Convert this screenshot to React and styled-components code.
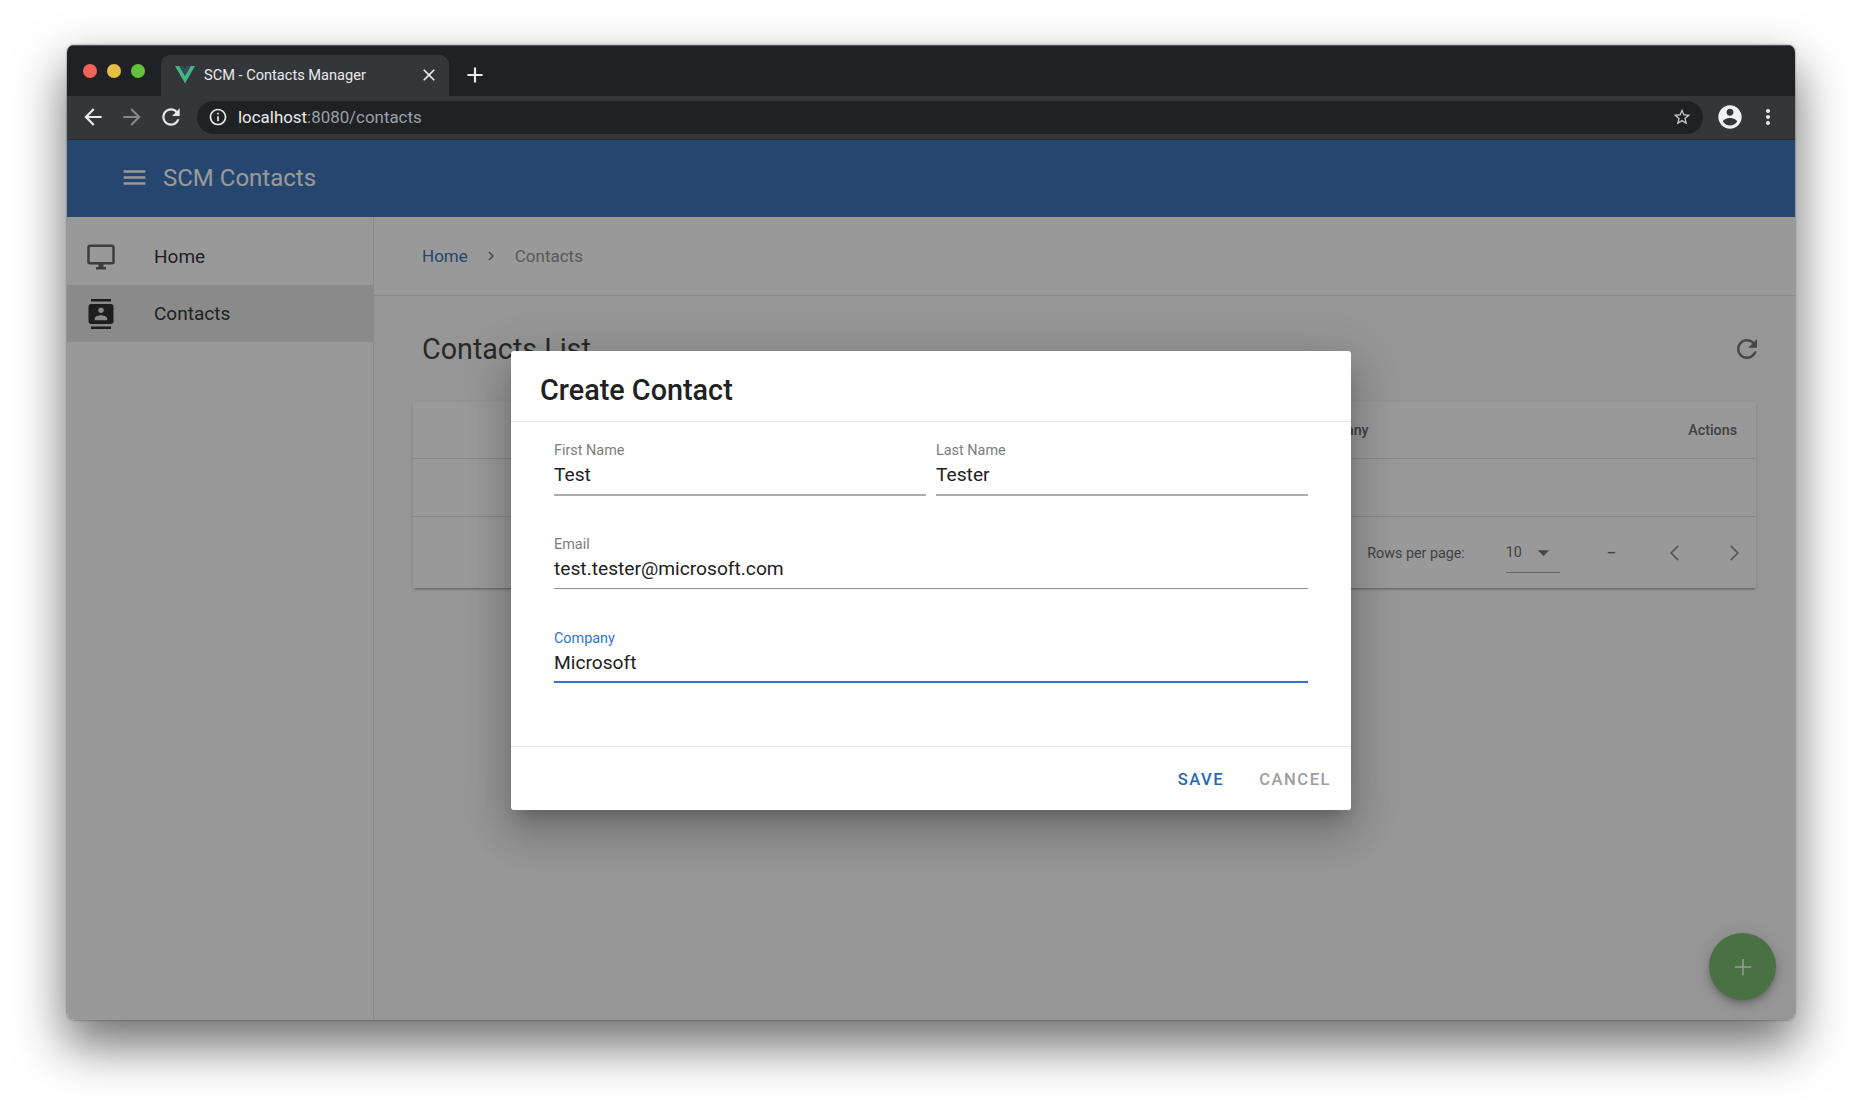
import React from "react";
import styled, { createGlobalStyle } from "styled-components";

const Global = createGlobalStyle`
  html, body { margin: 0; padding: 0; background: #fff; }
  body { font-family: Roboto, "Liberation Sans", sans-serif; width: 1862px; height: 1109px; overflow: hidden; }
  * { box-sizing: border-box; }
`;

const Page = styled.div`
  width: 1862px;
  height: 1109px;
  padding: 45px 67px 89px 67px;
`;

const Win = styled.div`
  position: relative;
  height: 975px;
  border-radius: 7px;
  display: flex;
  flex-direction: column;
  overflow: hidden;
`;

const WinShadow = styled.div`
  height: 100%;
  border-radius: 7px;
  box-shadow: 0 24px 50px 2px rgba(0, 0, 0, 0.56), 0 0 2px rgba(0, 0, 0, 0.6);
`;

const TabStrip = styled.div`
  height: 51px;
  flex: none;
  background: #202124;
  display: flex;
  align-items: flex-end;
  padding-left: 16px;
  border-top: 1px solid #55565a;
`;

const Lights = styled.div`
  display: flex;
  gap: 10px;
  width: 78px;
  align-self: flex-start;
  margin-top: 18px;
`;

const Light = styled.span`
  width: 14px;
  height: 14px;
  border-radius: 50%;
  background: ${p => p.$c};
`;

const Tab = styled.div`
  width: 288px;
  height: 41px;
  background: #35363a;
  border-radius: 9px 9px 0 0;
  display: flex;
  align-items: center;
  padding: 0 10px 2px 14px;
  color: #e8eaed;
  font-size: 14.6px;
`;

const TabTitle = styled.span`
  flex: 1;
  margin-left: 9px;
  white-space: nowrap;
`;

const NewTab = styled.div`
  height: 41px;
  display: flex;
  align-items: center;
  margin-left: 13px;
  padding-bottom: 2px;
`;

const Toolbar = styled.div`
  height: 44px;
  flex: none;
  background: #35363a;
  display: flex;
  align-items: center;
  padding: 0 15px 1px 13px;
  border-bottom: 1px solid #2a2b2e;
`;

const NavIcons = styled.div`
  display: flex;
  flex: none;
  gap: 13px;
  width: 117px;
`;

const Address = styled.div`
  width: 1506px;
  height: 33px;
  flex: none;
  background: #202124;
  border-radius: 17px;
  display: flex;
  align-items: center;
  padding: 0 11px 0 11px;
  font-size: 16.9px;
  color: #9aa0a6;
`;

const Url = styled.span`
  flex: 1;
  margin-left: 10px;
  b { font-weight: 400; color: #e8eaed; }
`;

const ToolRight = styled.div`
  display: flex;
  align-items: center;
  gap: 12px;
  margin-left: 13px;
  flex: none;
`;

const App_ = styled.div`
  flex: 1;
  position: relative;
  display: flex;
  flex-direction: column;
  min-height: 0;
`;

const AppBar = styled.div`
  height: 77px;
  flex: none;
  background: #2867b2;
  display: flex;
  align-items: center;
  padding: 0 0 2px 53px;
  color: #fff;
  font-size: 24px;
`;

const BarTitle = styled.span`
  margin-left: 14px;
`;

const Body = styled.div`
  flex: 1;
  display: flex;
  min-height: 0;
`;

const Sidebar = styled.nav`
  width: 307px;
  flex: none;
  background: #fff;
  border-right: 1px solid #e4e4e4;
  padding-top: 11px;
`;

const NavItem = styled.div`
  height: 57px;
  display: flex;
  align-items: center;
  padding-left: 19px;
  font-size: 19px;
  color: #212121;
  background: ${p => (p.$active ? "#e4e4e4" : "transparent")};
`;

const NavLabel = styled.span`
  margin-left: 38px;
`;

const Main = styled.main`
  flex: 1;
  min-width: 0;
  background: #f9f9f9;
`;

const Crumbs = styled.div`
  height: 79px;
  background: #fff;
  border-bottom: 1px solid #e6e6e6;
  display: flex;
  align-items: center;
  padding-left: 48px;
  font-size: 17px;
  color: #8a8a8a;
`;

const CrumbLink = styled.span`
  color: #2867b2;
`;

const CrumbSep = styled.span`
  display: flex;
  margin: 0 15px 0 14px;
`;

const TitleRow = styled.div`
  display: flex;
  align-items: center;
  justify-content: space-between;
  padding: 0 33px 0 48px;
  height: 106px;
`;

const PageTitle = styled.h1`
  margin: 0;
  font-size: 28.7px;
  font-weight: 400;
  color: #303030;
  line-height: 36px;
`;

const Card = styled.div`
  margin: 0 39px;
  background: #fff;
  box-shadow: 0 2px 2px -1px rgba(0, 0, 0, 0.35), 0 1px 4px rgba(0, 0, 0, 0.1);
`;

const HeadRow = styled.div`
  height: 57px;
  display: grid;
  grid-template-columns: 876px 1fr auto;
  align-items: center;
  padding: 0 19px;
  font-size: 14.3px;
  font-weight: 500;
  color: #5c5c5c;
  border-bottom: 1px solid #e0e0e0;
`;

const EmptyRow = styled.div`
  height: 58px;
  border-bottom: 1px solid #e0e0e0;
`;

const Foot = styled.div`
  height: 71px;
  display: flex;
  align-items: center;
  justify-content: flex-end;
  padding: 0 9px 0 0;
  font-size: 14.3px;
  color: #5c5c5c;
`;

const SelectBox = styled.div`
  width: 54px;
  height: 41px;
  margin: 0 47px 0 41px;
  display: flex;
  align-items: center;
  justify-content: space-between;
  padding: 0 3px 0 0;
  border-bottom: 1px solid #9e9e9e;
  font-size: 14.3px;
`;

const Dash = styled.span`
  margin-right: 46px;
  font-weight: 500;
`;

const Pager = styled.div`
  display: flex;
  gap: 33px;
`;

const Fab = styled.div`
  position: absolute;
  right: 19px;
  bottom: 20px;
  width: 67px;
  height: 67px;
  border-radius: 50%;
  background: #6eb562;
  display: flex;
  align-items: center;
  justify-content: center;
  box-shadow: 0 3px 5px -1px rgba(0, 0, 0, 0.2), 0 6px 10px 0 rgba(0, 0, 0, 0.14), 0 1px 18px 0 rgba(0, 0, 0, 0.12);
`;

const Scrim = styled.div`
  position: absolute;
  inset: 0;
  background: rgba(33, 33, 33, 0.46);
  display: flex;
  justify-content: center;
  align-items: flex-start;
  padding-top: 211px;
`;

const Dialog = styled.div`
  width: 840px;
  height: 459px;
  background: #fff;
  border-radius: 3px;
  display: flex;
  flex-direction: column;
  box-shadow: 0 11px 15px -7px rgba(0, 0, 0, 0.2), 0 24px 38px 3px rgba(0, 0, 0, 0.14), 0 9px 46px 8px rgba(0, 0, 0, 0.12);
`;

const DialogTitle = styled.div`
  height: 71px;
  flex: none;
  border-bottom: 1px solid #e6e6e6;
  padding: 7px 0 0 29px;
  display: flex;
  align-items: center;
  font-size: 28.8px;
  font-weight: 500;
  color: #212121;
`;

const Form = styled.div`
  flex: 1;
  padding: 20px 43px 0;
  display: grid;
  grid-template-columns: 1fr 1fr;
  column-gap: 10px;
  row-gap: 40px;
  align-content: start;
`;

const lines = {
  thick: "2px solid #adadad",
  thin: "1px solid #8f8f8f",
  focus: "2px solid #2b76d6",
};

const Field = styled.div`
  grid-column: ${p => (p.$wide ? "1 / -1" : "auto")};
  height: ${p => (p.$wide ? "53px" : "54px")};
  margin-bottom: ${p => (p.$wide ? "1px" : "0")};
  border-bottom: ${p => lines[p.$line]};
  display: flex;
  flex-direction: column;
`;

const FieldLabel = styled.label`
  font-size: 14.4px;
  line-height: 18px;
  color: ${p => (p.$focus ? "#2b76d6" : "#7d7d7d")};
`;

const FieldValue = styled.div`
  font-size: 19.2px;
  line-height: 28px;
  margin-top: 1px;
  color: #212121;
`;

const Actions = styled.div`
  height: 64px;
  flex: none;
  border-top: 1px solid #e6e6e6;
  display: flex;
  align-items: center;
  justify-content: flex-end;
  padding: 1px 20px 0 0;
  gap: 35px;
`;

const TextBtn = styled.span`
  font-size: 16.6px;
  font-weight: 500;
  letter-spacing: 1.5px;
  color: ${p => (p.$primary ? "#2867b2" : "#9e9e9e")};
`;

const Icon = ({ d, size = 24, color = "currentColor" }) => (
  <svg width={size} height={size} viewBox="0 0 24 24" style={{ display: "block", flex: "none" }}>
    <path d={d} fill={color} />
  </svg>
);

const ThinIcon = ({ d, size = 24, color = "currentColor" }) => (
  <svg width={size} height={size} viewBox="0 0 24 24" style={{ display: "block", flex: "none" }}>
    <path d={d} fill="none" stroke={color} strokeWidth="1.6" />
  </svg>
);

const paths = {
  back: "M20 11H7.83l5.59-5.59L12 4l-8 8 8 8 1.41-1.41L7.83 13H20v-2z",
  forward: "M12 4l-1.41 1.41L16.17 11H4v2h12.17l-5.58 5.59L12 20l8-8z",
  reload: "M17.65 6.35C16.2 4.9 14.21 4 12 4c-4.42 0-7.99 3.58-7.99 8s3.57 8 7.99 8c3.73 0 6.84-2.55 7.73-6h-2.08c-.82 2.33-3.04 4-5.65 4-3.31 0-6-2.69-6-6s2.69-6 6-6c1.66 0 3.14.69 4.22 1.78L13 11h7V4l-2.35 2.35z",
  info: "M11 7h2v2h-2zm0 4h2v6h-2zm1-9C6.48 2 2 6.48 2 12s4.48 10 10 10 10-4.48 10-10S17.52 2 12 2zm0 18c-4.41 0-8-3.59-8-8s3.59-8 8-8 8 3.59 8 8-3.59 8-8 8z",
  star: "M22 9.24l-7.19-.62L12 2 9.19 8.63 2 9.24l5.46 4.73L5.82 21 12 17.27 18.18 21l-1.63-7.03L22 9.24zM12 15.4l-3.76 2.27 1-4.28-3.32-2.88 4.38-.38L12 6.1l1.71 4.04 4.38.38-3.32 2.88 1 4.28L12 15.4z",
  account: "M12 2C6.48 2 2 6.48 2 12s4.48 10 10 10 10-4.48 10-10S17.52 2 12 2zm0 3c1.66 0 3 1.34 3 3s-1.34 3-3 3-3-1.34-3-3 1.34-3 3-3zm0 14.2c-2.5 0-4.71-1.28-6-3.22.03-1.99 4-3.08 6-3.08 1.99 0 5.97 1.09 6 3.08-1.29 1.94-3.5 3.22-6 3.22z",
  dots: "M12 8c1.1 0 2-.9 2-2s-.9-2-2-2-2 .9-2 2 .9 2 2 2zm0 2c-1.1 0-2 .9-2 2s.9 2 2 2 2-.9 2-2-.9-2-2-2zm0 6c-1.1 0-2 .9-2 2s.9 2 2 2 2-.9 2-2-.9-2-2-2z",
  close: "M19 6.41L17.59 5 12 10.59 6.41 5 5 6.41 10.59 12 5 17.59 6.41 19 12 13.41 17.59 19 19 17.59 13.41 12z",
  plus: "M19 13h-6v6h-2v-6H5v-2h6V5h2v6h6v2z",
  thinPlus: "M19.5 12.7h-6.8v6.8h-1.4v-6.8H4.5v-1.4h6.8V4.5h1.4v6.8h6.8z",
  menu: "M3 18h18v-2H3v2zm0-5h18v-2H3v2zm0-7v2h18V6H3z",
  monitor: "M21,16H3V4H21M21,2H3C1.89,2 1,2.89 1,4V16A2,2 0 0,0 3,18H10V20H8V22H16V20H14V18H21A2,2 0 0,0 23,16V4C23,2.89 22.1,2 21,2Z",
  contacts: "M20 0H4v2h16V0zM4 24h16v-2H4v2zM20 4H4c-1.1 0-2 .9-2 2v12c0 1.1.9 2 2 2h16c1.1 0 2-.9 2-2V6c0-1.1-.9-2-2-2zm-8 2.75c1.24 0 2.25 1.01 2.25 2.25s-1.01 2.25-2.25 2.25S9.75 10.24 9.75 9 10.76 6.75 12 6.75zM17 17H7v-1.5c0-1.67 3.33-2.5 5-2.5s5 .83 5 2.5V17z",
  chevR: "M8.59 16.59L13.17 12 8.59 7.41 10 6l6 6-6 6z",
  thinL: "M15 5.5L8.5 12l6.5 6.5",
  thinR: "M9 5.5l6.5 6.5L9 18.5",
  caret: "M7 10l5 5 5-5z",
};

const VueLogo = () => (
  <svg width="20" height="17" viewBox="0 0 256 221" style={{ flex: "none" }}>
    <path d="M204.8 0H256L128 220.8 0 0h97.92L128 51.2 157.44 0h47.36z" fill="#41b883" />
    <path d="M0 0l128 220.8L256 0h-51.2L128 132.48 50.56 0H0z" fill="#41b883" />
    <path d="M50.56 0L128 133.12 204.8 0h-47.36L128 51.2 97.92 0H50.56z" fill="#35495e" />
  </svg>
);

export default function App() {
  return (
    <Page>
      <Global />
      <WinShadow>
        <Win>
          <TabStrip>
            <Lights>
              <Light $c="#f0625a" />
              <Light $c="#e5bf3f" />
              <Light $c="#62c13d" />
            </Lights>
            <Tab>
              <VueLogo />
              <TabTitle>SCM - Contacts Manager</TabTitle>
              <Icon d={paths.close} size={20} color="#e8eaed" />
            </Tab>
            <NewTab>
              <Icon d={paths.plus} size={26} color="#e8eaed" />
            </NewTab>
          </TabStrip>
          <Toolbar>
            <NavIcons>
              <Icon d={paths.back} size={26} color="#e8eaed" />
              <Icon d={paths.forward} size={26} color="#85878a" />
              <Icon d={paths.reload} size={26} color="#e8eaed" />
            </NavIcons>
            <Address>
              <Icon d={paths.info} size={20} color="#e8eaed" />
              <Url><b>localhost</b>:8080/contacts</Url>
              <Icon d={paths.star} size={20} color="#c4c7c9" />
            </Address>
            <ToolRight>
              <Icon d={paths.account} size={28} color="#f1f3f4" />
              <Icon d={paths.dots} size={24} color="#e8eaed" />
            </ToolRight>
          </Toolbar>
          <App_>
            <AppBar>
              <Icon d={paths.menu} size={29} color="#fff" />
              <BarTitle>SCM Contacts</BarTitle>
            </AppBar>
            <Body>
              <Sidebar>
                <NavItem>
                  <Icon d={paths.monitor} size={30} color="#555" />
                  <NavLabel>Home</NavLabel>
                </NavItem>
                <NavItem $active>
                  <Icon d={paths.contacts} size={30} color="#1c1c1c" />
                  <NavLabel>Contacts</NavLabel>
                </NavItem>
              </Sidebar>
              <Main>
                <Crumbs>
                  <CrumbLink>Home</CrumbLink>
                  <CrumbSep><Icon d={paths.chevR} size={18} color="#666" /></CrumbSep>
                  <span>Contacts</span>
                </Crumbs>
                <TitleRow>
                  <PageTitle>Contacts List</PageTitle>
                  <Icon d={paths.reload} size={30} color="#666" />
                </TitleRow>
                <Card>
                  <HeadRow>
                    <span />
                    <span>Company</span>
                    <span>Actions</span>
                  </HeadRow>
                  <EmptyRow />
                  <Foot>
                    <span>Rows per page:</span>
                    <SelectBox>
                      <span>10</span>
                      <Icon d={paths.caret} size={27} color="#666" />
                    </SelectBox>
                    <Dash>–</Dash>
                    <Pager>
                      <ThinIcon d={paths.thinL} size={26} color="#8a8a8a" />
                      <ThinIcon d={paths.thinR} size={26} color="#8a8a8a" />
                    </Pager>
                  </Foot>
                </Card>
              </Main>
            </Body>
            <Fab>
              <Icon d={paths.thinPlus} size={26} color="#fff" />
            </Fab>
            <Scrim>
              <Dialog>
                <DialogTitle>Create Contact</DialogTitle>
                <Form>
                  <Field $line="thick">
                    <FieldLabel>First Name</FieldLabel>
                    <FieldValue>Test</FieldValue>
                  </Field>
                  <Field $line="thick">
                    <FieldLabel>Last Name</FieldLabel>
                    <FieldValue>Tester</FieldValue>
                  </Field>
                  <Field $wide $line="thin">
                    <FieldLabel>Email</FieldLabel>
                    <FieldValue>test.tester@microsoft.com</FieldValue>
                  </Field>
                  <Field $wide $line="focus">
                    <FieldLabel $focus>Company</FieldLabel>
                    <FieldValue>Microsoft</FieldValue>
                  </Field>
                </Form>
                <Actions>
                  <TextBtn $primary>SAVE</TextBtn>
                  <TextBtn>CANCEL</TextBtn>
                </Actions>
              </Dialog>
            </Scrim>
          </App_>
        </Win>
      </WinShadow>
    </Page>
  );
}
